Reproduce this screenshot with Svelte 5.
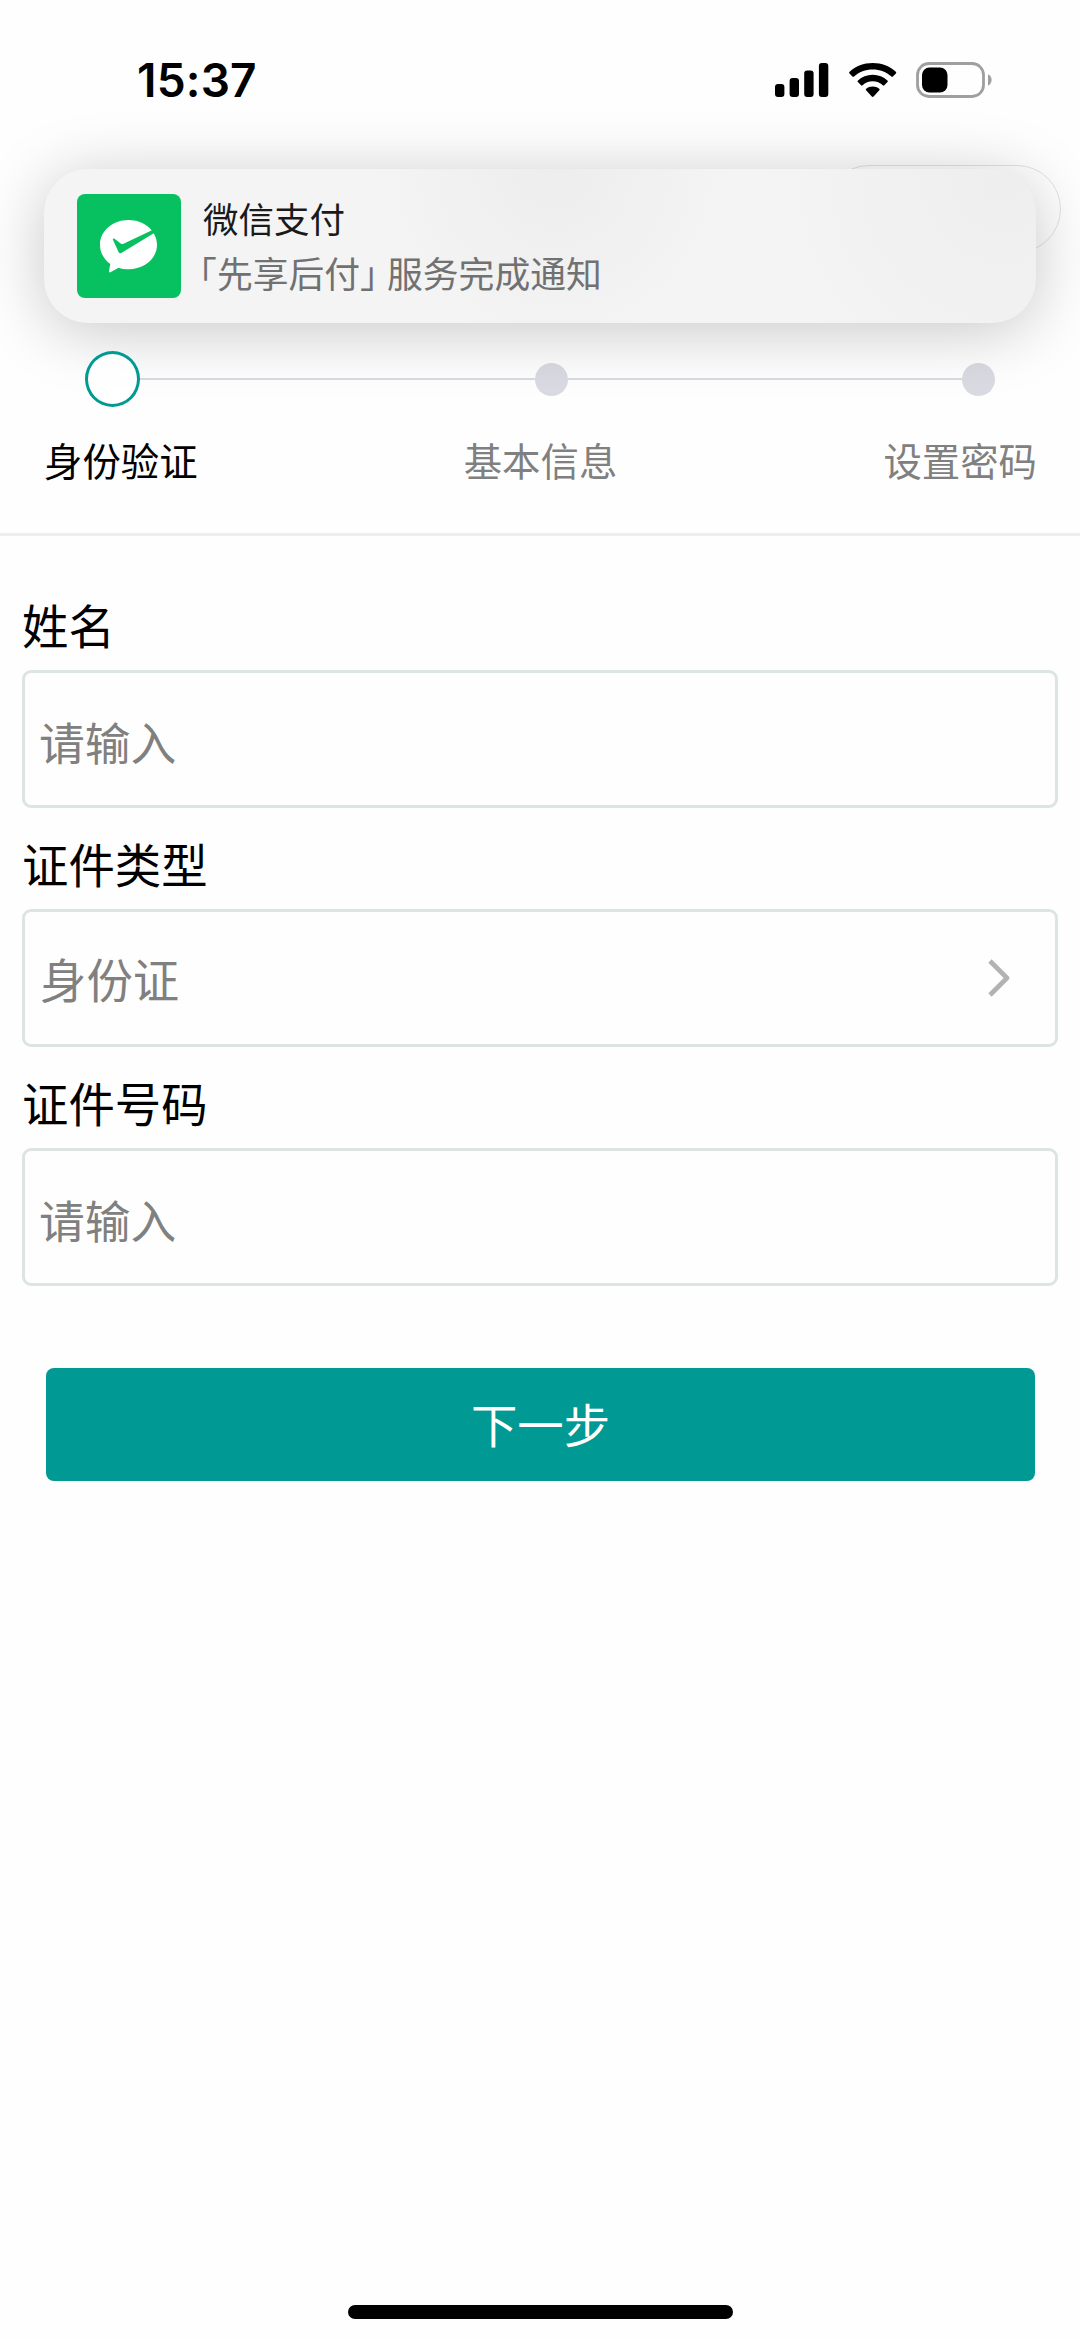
<script lang="ts">
	type Field = { id: string; label: string; value: string; picker?: boolean };

	const steps = ['身份验证', '基本信息', '设置密码'];
	const current = 0;

	const fields: Field[] = [
		{ id: 'name', label: '姓名', value: '请输入' },
		{ id: 'type', label: '证件类型', value: '身份证', picker: true },
		{ id: 'number', label: '证件号码', value: '请输入' }
	];
</script>

<div class="screen">
	<header class="status">
		<span class="time">15:37</span>
		<div class="indicators">
			<svg class="signal" width="54" height="35" viewBox="0 0 54 35">
				<rect x="0" y="21" width="9.4" height="13" rx="3" />
				<rect x="14.6" y="15" width="9.4" height="19" rx="3" />
				<rect x="29.2" y="7.5" width="9.4" height="26.5" rx="3" />
				<rect x="43.9" y="0" width="9.4" height="34" rx="3" />
			</svg>
			<svg class="wifi" width="48" height="35" viewBox="0 0 48 35">
				<path d="M23.7 0C14.6 0 6.6 3.2.6 8.8c-.6.6-.6 1.1-.1 1.6l3 3.1c.5.5 1 .5 1.5 0C10 9 16.5 6.500 23.7 6.500S37.4 9 42.4 13.5c.5.5 1 .5 1.500 0l3-3.1c.5-.5.5-1-.1-1.600C40.800 3.200 32.800 0 23.700 0z" />
				<path d="M23.7 11.8c-5.800 0-10.900 2.200-14.700 5.700-.6.5-.6 1.100-.1 1.600l3.200 3.200c.5.5 1 .5 1.500 0 2.700-2.500 6.200-4 10.100-4s7.400 1.500 10.100 4c.5.5 1 .5 1.500 0l3.200-3.200c.5-.5.5-1.100-.1-1.600-3.800-3.500-8.900-5.700-14.700-5.700z" />
				<path d="M23.7 23.4c-2.500 0-4.700.8-6.500 2.300-.6.500-.6 1.100-.1 1.600l5.700 6.300c.6.600 1.200.6 1.800 0l5.700-6.300c.5-.5.5-1.100-.1-1.600-1.800-1.500-4-2.300-6.500-2.300z" />
			</svg>
			<svg class="battery" width="76" height="36" viewBox="0 0 76 36">
				<rect x="1.5" y="1.5" width="66" height="33" rx="11.5" fill="none" stroke="#9f9f9f" stroke-width="2.8" />
				<rect x="6" y="5.5" width="25.5" height="25" rx="7.5" />
				<path d="M72 12.3c2.200 1 3.600 3.100 3.600 5.700s-1.400 4.700-3.600 5.700z" fill="#9f9f9f" />
			</svg>
		</div>
	</header>

	<div class="capsule"></div>

	<section class="steps">
		<div class="track">
			{#each steps as step, i (step)}
				{#if i > 0}
					<span class="line"></span>
				{/if}
				<span class={i === current ? 'ring' : 'dot'}></span>
			{/each}
		</div>
		<div class="names">
			{#each steps as step, i (step)}
				<span class:active={i === current}>{step}</span>
			{/each}
		</div>
	</section>

	<main class="form">
		{#each fields as field (field.id)}
			<div class="field">
				<div class="label">{field.label}</div>
				<div class="box" class:picker={field.picker}>
					<span>{field.value}</span>
					{#if field.picker}
						<svg width="22" height="38" viewBox="0 0 22 38">
							<path d="M2 2l17 17L2 36" fill="none" stroke="#b2b2b2" stroke-width="4.6" stroke-linejoin="round" />
						</svg>
					{/if}
				</div>
			</div>
		{/each}
		<button class="next" type="button">下一步</button>
	</main>

	<div class="home"></div>

	<!-- push banner, floats over the page header -->
	<aside class="banner">
		<svg class="logo" width="104" height="104" viewBox="0 0 104 104">
			<rect width="104" height="104" rx="8" fill="#07c160" />
			<path d="M51.5 26C35.500 26 23 37 23 50.800c0 8 4 14.700 10.300 19.200L32 77.300c-.2 1 .5 1.400 1.400.9l8.200-4.500c3.200 1 6.400 1.500 9.900 1.500C67.500 75.200 80 64.500 80 50.800S67.500 26 51.500 26z" fill="#fff" />
			<path d="M35.8 45.500c0-1 .9-1.400 1.700-.8l6.200 4.800c.9.7 1.700.7 2.800.2L76 35.800l2 2.700-33.700 20.400c-1.200.7-2.100.4-2.700-.8z" fill="#07c160" />
		</svg>
		<div class="message">
			<div class="title">微信支付</div>
			<div class="body">「先享后付<span class="close">」</span>服务完成通知</div>
		</div>
	</aside>
</div>

<style>
	:global(body) {
		background: #fefefe;
	}

	.screen {
		position: relative;
		display: flex;
		flex-direction: column;
		width: 1080px;
		height: 2341px;
		overflow: hidden;
		background: #fefefe;
		color: #000;
		font-family: 'Noto Sans CJK SC', sans-serif;
	}

	.status {
		display: flex;
		justify-content: space-between;
		align-items: center;
		box-sizing: border-box;
		height: 160px;
		padding: 0 88px 0 137px;
	}

	.time {
		font: 600 46px/60px Inter, sans-serif;
		letter-spacing: 0.2px;
	}

	.indicators {
		display: flex;
		align-items: center;
	}

	.wifi {
		margin-left: 20px;
	}

	.battery {
		margin-left: 19px;
	}

	.capsule {
		box-sizing: border-box;
		align-self: flex-end;
		width: 236px;
		height: 88px;
		margin: 5px 19px 0 0;
		border: 1px solid #e2e2e2;
		border-radius: 44px;
	}

	.steps {
		box-sizing: border-box;
		height: 283px;
		padding-top: 98px;
		border-bottom: 3px solid #ededf0;
	}

	.track {
		display: flex;
		align-items: center;
		padding: 0 85px;
	}

	.ring {
		position: relative;
		z-index: 1;
		box-sizing: border-box;
		width: 55px;
		height: 56px;
		border: 3px solid #009a92;
		border-radius: 50%;
		background: rgba(255, 255, 255, 0.75);
	}

	.dot {
		width: 33px;
		height: 33px;
		border-radius: 50%;
		background: #dadae3;
	}

	.line {
		flex: 1;
		height: 2px;
		background: #dadae1;
	}

	.names {
		display: flex;
		justify-content: space-between;
		padding: 29px 43px 0 44px;
		color: #808080;
		font-size: 38.4px;
		line-height: 46px;
	}

	.names .active {
		color: #000;
	}

	.form {
		display: flex;
		flex-direction: column;
		padding: 58px 22px 0;
		font-size: 46.4px;
		line-height: 60px;
	}

	.field {
		margin-bottom: 25px;
	}

	.box {
		display: flex;
		align-items: center;
		justify-content: space-between;
		box-sizing: border-box;
		height: 138px;
		margin-top: 16px;
		padding: 3px 45px 0 14px;
		border: 3px solid #dce5e2;
		border-radius: 9px;
		color: #808080;
		font-size: 45.8px;
	}

	.picker {
		padding: 0 45px 0 15px;
		font-size: 46.4px;
	}

	.next {
		height: 113px;
		margin: 57px 23px 0 24px;
		padding: 0 0 4px;
		border: 0;
		border-radius: 8px;
		background: #009993;
		color: #fff;
		font: inherit;
	}

	.home {
		width: 385px;
		height: 14px;
		margin: auto auto 22px;
		border-radius: 7px;
		background: #000;
	}

	.banner {
		position: absolute;
		top: 169px;
		left: 44px;
		display: flex;
		align-items: center;
		box-sizing: border-box;
		width: 992px;
		height: 154px;
		padding: 0 33px;
		border-radius: 44px;
		background:
			radial-gradient(circle at 510px 0, #ededed, rgba(243, 243, 243, 0) 180px),
			radial-gradient(circle at 960px 10px, #eee, rgba(243, 243, 243, 0) 240px),
			#f4f4f4;
		box-shadow: 0 8px 65px rgba(0, 0, 0, 0.22);
	}

	.message {
		margin: -3px 0 0 22px;
		font-size: 35.5px;
		line-height: 55px;
		white-space: nowrap;
	}

	.title {
		color: #1a1a1a;
	}

	/* half-width corner brackets */
	.body {
		margin-left: -4px;
		color: #717171;
		font-size: 35.8px;
		font-feature-settings: 'halt';
	}

	.close {
		margin-right: 9px;
	}
</style>
